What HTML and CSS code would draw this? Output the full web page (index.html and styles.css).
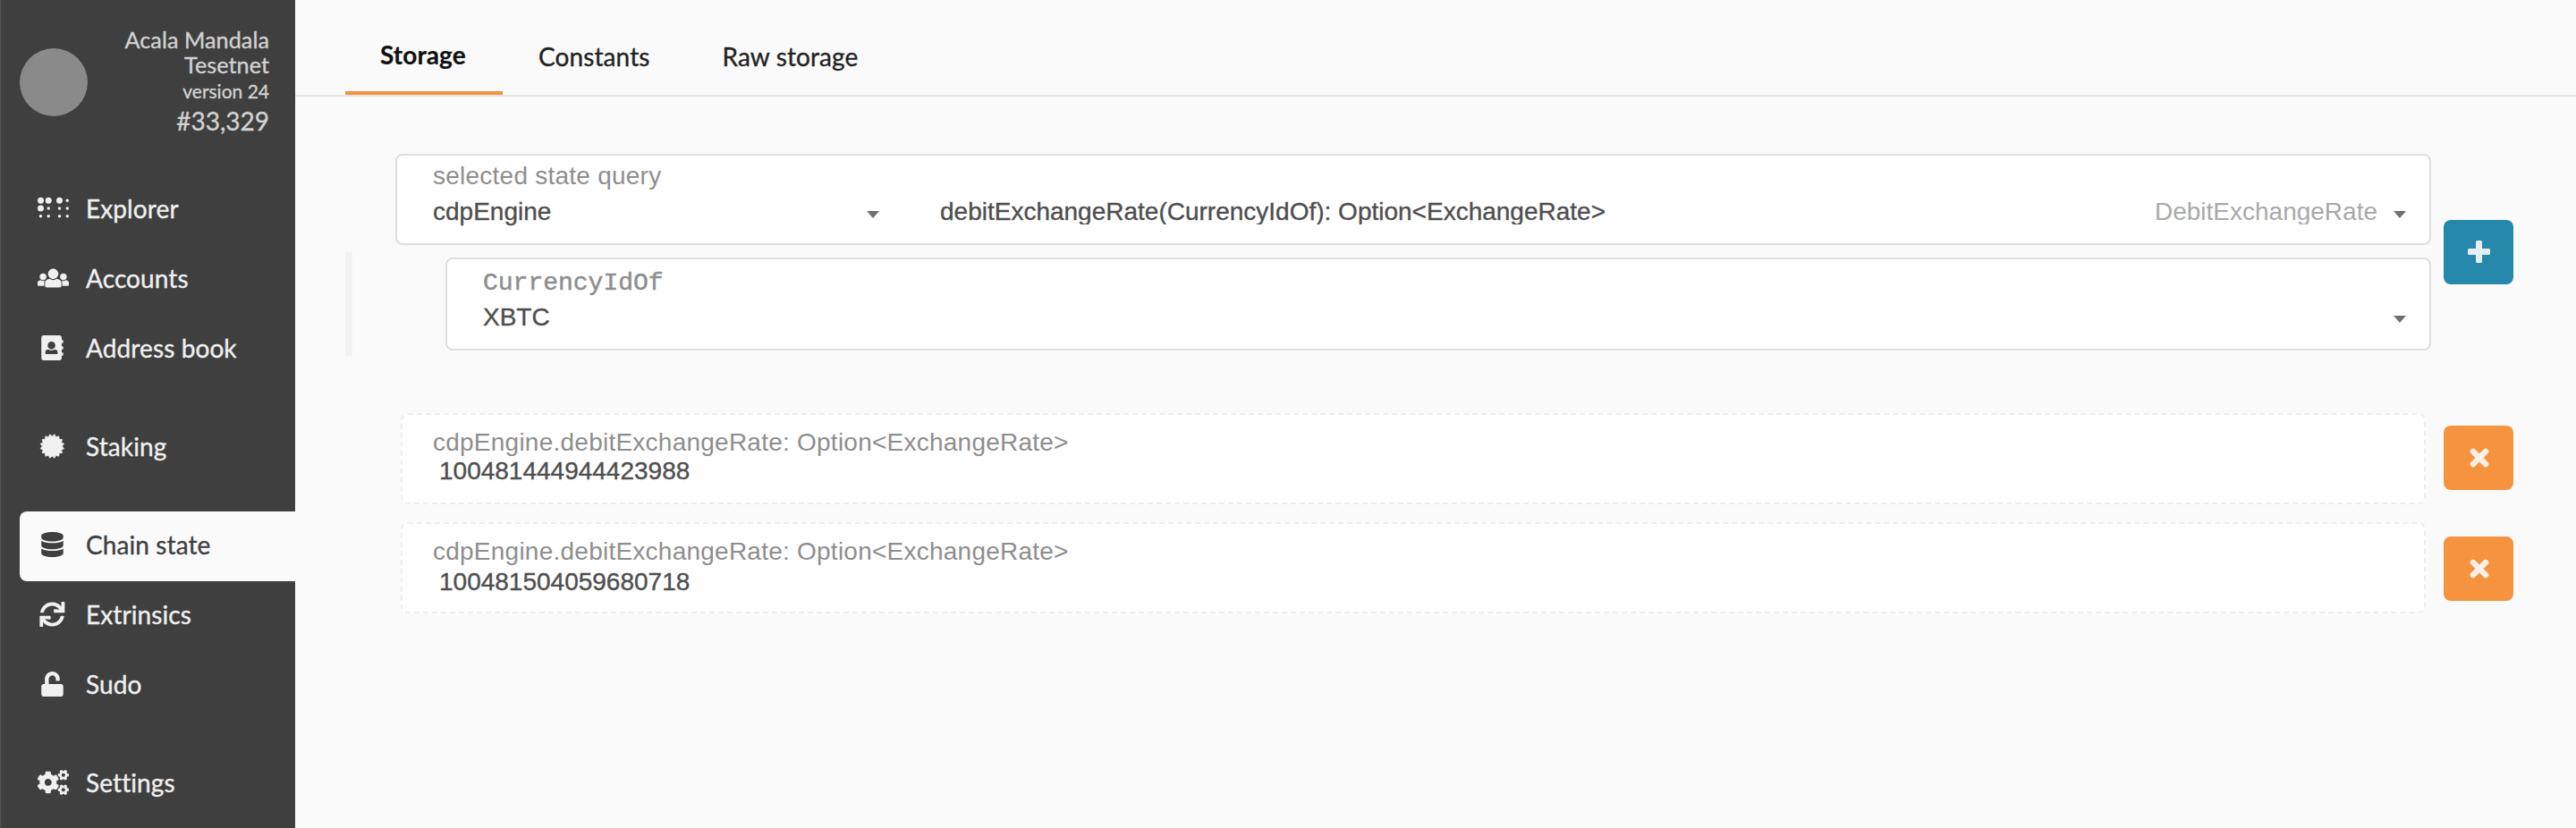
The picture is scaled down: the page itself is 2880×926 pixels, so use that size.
FILE: index.html
```
<!DOCTYPE html>
<html lang="en">
<head>
<meta charset="utf-8">
<title>Chain state</title>
<link rel="stylesheet" href="styles.css">
</head>
<body>
<aside class="sidebar">
  <header class="chain">
    <span class="chain-logo"></span>
    <div class="chain-info">
      <div class="chain-name">Acala Mandala Tesetnet</div>
      <div class="chain-version">version 24</div>
      <div class="chain-block">#33,329</div>
    </div>
  </header>
  <nav class="menu">
    <a class="item"><svg class="icon" viewBox="0 0 640 512"><g><circle cx="64" cy="96" r="64"/><circle cx="224" cy="96" r="64"/><circle cx="64" cy="256" r="64"/><circle cx="448" cy="96" r="64"/><circle cx="608" cy="96" r="32"/><circle cx="224" cy="256" r="32"/><circle cx="448" cy="256" r="32"/><circle cx="608" cy="256" r="32"/><circle cx="64" cy="416" r="32"/><circle cx="224" cy="416" r="32"/><circle cx="448" cy="416" r="32"/><circle cx="608" cy="416" r="32"/></g></svg><span>Explorer</span></a>
    <a class="item"><svg class="icon" viewBox="0 0 640 512"><path d="M320 64c57.99 0 105 47.01 105 105s-47.01 105-105 105-105-47.01-105-105S262.01 64 320 64zm113.463 217.366l-39.982-9.996c-49.168 35.365-108.766 27.473-146.961 0l-39.982 9.996C174.485 289.379 152 318.177 152 351.216V412c0 19.882 16.118 36 36 36h264c19.882 0 36-16.118 36-36v-60.784c0-33.039-22.485-61.837-54.537-69.85zM528 300c38.66 0 70-31.34 70-70s-31.34-70-70-70-70 31.34-70 70 31.34 70 70 70zm-416 0c38.66 0 70-31.34 70-70s-31.34-70-70-70-70 31.34-70 70 31.34 70 70 70zm24 112v-60.784c0-16.551 4.593-32.204 12.703-45.599-29.988 14.72-63.336 8.708-85.69-7.37l-26.655 6.664C14.99 310.252 0 329.452 0 351.477V392c0 13.255 10.745 24 24 24h112.169a52.417 52.417 0 0 1-.169-4zm467.642-107.09l-26.655-6.664c-27.925 20.086-60.89 19.233-85.786 7.218C499.369 318.893 504 334.601 504 351.216V412c0 1.347-.068 2.678-.169 4H616c13.255 0 24-10.745 24-24v-40.523c0-22.025-14.99-41.225-36.358-46.567z"/></svg><span>Accounts</span></a>
    <a class="item"><svg class="icon" viewBox="-77 0 640 512"><path d="M436 160c6.6 0 12-5.4 12-12v-40c0-6.6-5.4-12-12-12h-20V48c0-26.5-21.5-48-48-48H48C21.5 0 0 21.5 0 48v416c0 26.5 21.5 48 48 48h320c26.5 0 48-21.5 48-48v-48h20c6.6 0 12-5.4 12-12v-40c0-6.6-5.4-12-12-12h-20v-64h20c6.6 0 12-5.4 12-12v-40c0-6.6-5.4-12-12-12h-20v-64h20zm-228-32c44 0 79 35 79 79s-35 79-79 79-79-35-79-79 35-79 79-79zm126 236.800c0 10.600-10 19.200-22.400 19.200H104.400C92 384 82 375.400 82 364.800v-19.200c0-31.800 20-50 56-57.600c40 28 100 28 140 0c36 7.600 56 25.800 56 57.600v19.200z"/></svg><span>Address book</span></a>
    <a class="item gap"><svg class="icon" viewBox="-43 0 640 512"><polygon class="seal" points="456,256 497.3,304 440.8,332.5 460.5,392.7 397.4,397.4 392.7,460.5 332.5,440.8 304,497.3 256,456 208,497.3 179.5,440.8 119.3,460.5 114.6,397.4 51.5,392.7 71.2,332.5 14.7,304 56,256 14.7,208 71.2,179.5 51.5,119.3 114.6,114.6 119.3,51.5 179.5,71.2 208,14.7 256,56 304,14.7 332.5,71.2 392.7,51.5 397.4,114.6 460.5,119.3 440.8,179.5 497.3,208"/></svg><span>Staking</span></a>
    <a class="item gap active"><svg class="icon" viewBox="-77 0 640 512"><path d="M448 73.143v45.714C448 159.143 347.667 192 224 192S0 159.143 0 118.857V73.143C0 32.857 100.333 0 224 0s224 32.857 224 73.143zM448 176v102.857C448 319.143 347.667 352 224 352S0 319.143 0 278.857V176c48.125 33.143 136.208 48.572 224 48.572S399.874 209.143 448 176zm0 160v102.857C448 479.143 347.667 512 224 512S0 479.143 0 438.857V336c48.125 33.143 136.208 48.572 224 48.572S399.874 369.143 448 336z"/></svg><span>Chain state</span></a>
    <a class="item"><svg class="icon" viewBox="-43 0 640 512"><path d="M440.935 12.574l3.966 82.766C399.416 41.904 331.674 8 256 8 134.813 8 33.933 94.924 12.296 209.824 10.908 217.193 16.604 224 24.103 224h49.084c5.570 0 10.377-3.842 11.676-9.259C103.407 137.408 172.931 80 256 80c60.893 0 114.512 30.856 146.104 77.801l-101.530-4.865c-6.845-.327-12.574 5.133-12.574 11.986v47.411c0 6.627 5.373 12 12 12h200.333c6.627 0 12-5.373 12-12V12c0-6.627-5.373-12-12-12h-47.411c-6.853 0-12.315 5.729-11.987 12.574zM256 432c-60.895 0-114.517-30.858-146.109-77.805l101.868 4.871c6.845.327 12.573-5.134 12.573-11.986v-47.412c0-6.627-5.373-12-12-12H12c-6.627 0-12 5.373-12 12V500c0 6.627 5.373 12 12 12h47.385c6.863 0 12.328-5.745 11.985-12.599l-4.129-82.575C112.725 470.166 180.405 504 256 504c121.187 0 222.067-86.924 243.704-201.824 1.388-7.369-4.308-14.176-11.807-14.176h-49.084c-5.570 0-10.377 3.842-11.676 9.259C408.593 374.592 339.069 432 256 432z"/></svg><span>Extrinsics</span></a>
    <a class="item"><svg class="icon" viewBox="-77 0 640 512"><path d="M400 256H152V152.900c0-39.600 31.700-72.500 71.300-72.900 40-.4 72.700 32.100 72.700 72v16c0 13.300 10.700 24 24 24h32c13.300 0 24-10.700 24-24v-16C376 68 307.500-.3 223.500 0 139.500.3 72 69.500 72 153.500V256H48c-26.500 0-48 21.500-48 48v160c0 26.500 21.500 48 48 48h352c26.500 0 48-21.500 48-48V304c0-26.500-21.500-48-48-48z"/></svg><span>Sudo</span></a>
    <a class="item gap"><svg class="icon" viewBox="0 0 640 512"><path id="cog" d="M512.100 191l-8.200 14.300c-3 5.300-9.400 7.500-15.100 5.400-11.800-4.400-22.600-10.700-32.100-18.600-4.600-3.800-5.800-10.500-2.800-15.700l8.200-14.300c-6.900-8-12.300-17.300-15.900-27.400h-16.500c-6 0-11.200-4.300-12.200-10.300-2-12-2.100-24.600 0-37.100 1-6 6.200-10.400 12.200-10.400h16.500c3.600-10.100 9-19.400 15.900-27.400l-8.200-14.300c-3-5.200-1.900-11.900 2.800-15.700 9.500-7.900 20.400-14.200 32.100-18.600 5.700-2.100 12.100.1 15.100 5.400l8.200 14.300c10.500-1.900 21.200-1.900 31.700 0L552 6.300c3-5.300 9.400-7.500 15.100-5.400 11.800 4.400 22.600 10.700 32.100 18.600 4.600 3.800 5.800 10.500 2.800 15.700l-8.200 14.300c6.900 8 12.300 17.300 15.900 27.400h16.500c6 0 11.200 4.300 12.200 10.300 2 12 2.100 24.600 0 37.100-1 6-6.200 10.400-12.200 10.400h-16.500c-3.600 10.100-9 19.400-15.900 27.400l8.200 14.300c3 5.200 1.900 11.900-2.800 15.700-9.500 7.900-20.400 14.200-32.100 18.600-5.700 2.100-12.100-.1-15.100-5.400l-8.200-14.300c-10.400 1.900-21.200 1.900-31.700 0zm-10.500-58.800c38.500 29.600 82.400-14.300 52.800-52.800-38.500-29.700-82.400 14.300-52.800 52.800z"/><use href="#cog" y="300"/><path d="M386.300 286.100l33.700 16.800c10.100 5.800 14.500 18.100 10.500 29.100-8.900 24.200-26.400 46.400-42.600 65.800-7.400 8.900-20.200 11.100-30.300 5.300l-29.100-16.800c-16 13.700-34.600 24.600-54.900 31.700v33.600c0 11.600-8.300 21.600-19.700 23.600-24.600 4.200-50.400 4.400-75.900 0-11.500-2-20-11.900-20-23.600V418c-20.300-7.200-38.900-18-54.900-31.700L74 403c-10 5.800-22.900 3.600-30.300-5.300-16.200-19.400-33.300-41.600-42.200-65.700-4-10.900.4-23.200 10.500-29.100l33.300-16.800c-3.900-20.900-3.900-42.400 0-63.400L12 205.800c-10.100-5.800-14.600-18.100-10.500-29 8.900-24.200 26-46.400 42.200-65.800 7.400-8.900 20.200-11.100 30.300-5.300l29.100 16.800c16-13.700 34.600-24.600 54.900-31.700V57.100c0-11.500 8.200-21.500 19.600-23.500 24.600-4.200 50.500-4.400 76-.1 11.500 2 20 11.900 20 23.600v33.600c20.300 7.200 38.900 18 54.900 31.700l29.100-16.800c10-5.800 22.900-3.600 30.300 5.300 16.200 19.400 33.200 41.600 42.100 65.800 4 10.900.1 23.200-10 29.100l-33.700 16.800c3.900 21 3.900 42.500 0 63.500zm-117.600 21.100c59.200-77-28.700-164.900-105.700-105.700-59.200 77 28.700 164.900 105.700 105.700z"/></svg><span>Settings</span></a>
  </nav>
</aside>
<main class="content">
  <nav class="tabs">
    <a class="tab selected">Storage</a>
    <a class="tab">Constants</a>
    <a class="tab">Raw storage</a>
  </nav>
  <section class="query">
    <div class="fields">
      <div class="field state">
        <label class="label">selected state query</label>
        <div class="selects">
          <div class="value module"><span>cdpEngine</span><i class="caret"></i></div>
          <div class="value method"><span class="clip signature">debitExchangeRate(CurrencyIdOf): Option&lt;ExchangeRate&gt;</span><span class="clip hint">DebitExchangeRate</span><i class="caret"></i></div>
        </div>
      </div>
      <div class="params">
        <div class="field param">
          <label class="label mono">CurrencyIdOf</label>
          <div class="value"><span>XBTC</span><i class="caret"></i></div>
        </div>
      </div>
    </div>
    <button class="button add"><svg viewBox="0 0 25 25"><path d="M10.500 0h4q1.500 0 1.500 1.500V9h7.500q1.500 0 1.500 1.500v4q0 1.500-1.500 1.500H16v7.500q0 1.500-1.500 1.500h-4q-1.500 0-1.500-1.500V16H1.500Q0 16 0 14.500v-4Q0 9 1.500 9H9V1.500Q9 0 10.500 0z"/></svg></button>
  </section>
  <section class="results">
    <div class="result">
      <div class="output"><label class="label">cdpEngine.debitExchangeRate: Option&lt;ExchangeRate&gt;</label><div class="number">100481444944423988</div></div>
      <button class="button remove"><svg viewBox="0 0 22 22"><path class="cross" d="M4 4l14 14M18 4L4 18"/></svg></button>
    </div>
    <div class="result second">
      <div class="output"><label class="label">cdpEngine.debitExchangeRate: Option&lt;ExchangeRate&gt;</label><div class="number">100481504059680718</div></div>
      <button class="button remove"><svg viewBox="0 0 22 22"><path class="cross" d="M4 4l14 14M18 4L4 18"/></svg></button>
    </div>
  </section>
</main>
</body>
</html>
```
FILE: styles.css
```
* { box-sizing: border-box; }

body {
  margin: 0;
  display: flex;
  height: 926px;
  overflow: hidden;
  background: #fafafa;
  color: #4e4e4e;
  font: 28px/32px "Liberation Sans", Arial, sans-serif;
  font-variant-ligatures: none;
  -webkit-text-stroke: 0.35px currentColor;
}

/* Sidebar */
.sidebar {
  width: 330px;
  flex: none;
  background: #3f3f3f;
  border-left: 1px solid #535353;
  color: #f0f0f0;
  font-family: Lato, sans-serif;
}
.chain {
  display: flex;
  justify-content: space-between;
  height: 196px;
  padding: 30px 29px 0 21px;
  color: #d2d2d2;
}
.chain-logo {
  width: 76px;
  height: 76px;
  margin-top: 24px;
  border-radius: 50%;
  background: #8a8a8a;
}
.chain-info { width: 180px; text-align: right; }
.chain-name { font-size: 25.2px; line-height: 28px; letter-spacing: 0.05px; }
.chain-version { font-size: 21px; line-height: 31px; }
.chain-block { font-size: 28px; line-height: 36px; }

.menu { padding-left: 21px; }
.item {
  display: flex;
  align-items: center;
  gap: 19px;
  height: 78px;
  padding: 0 0 4px 20px;
  border-radius: 8px 0 0 8px;
  letter-spacing: 0.1px;
}
.item.gap { margin-top: 32px; }
.item.active { background: #fafafa; color: #3f3f3f; }
.icon { width: 35px; height: 28px; fill: currentColor; }
.seal { stroke: currentColor; stroke-width: 16; stroke-linejoin: round; }

/* Tabs */
.content { flex: 1; min-width: 0; }
.tabs {
  display: flex;
  height: 108px;
  padding-left: 56px;
  border-bottom: 2px solid #e6e6e6;
  font-family: Lato, sans-serif;
  color: #222;
}
.tab { padding: 47px 41px 0 40px; letter-spacing: 0.1px; }
.tab.selected {
  width: 176px;
  padding: 45px 0 0 39px;
  border-bottom: 4px solid #f5933f;
  color: #111;
  font-weight: 700;
  -webkit-text-stroke: 0.2px currentColor;
}

/* Query form */
.query {
  display: flex;
  align-items: flex-start;
  gap: 14px;
  padding: 64px 70px 0 56px;
}
.fields { flex: 1; }
.field {
  background: #fff;
  border: 2px solid #dedede;
  border-radius: 8px;
}
.label {
  display: block;
  color: #8e8e8e;
  letter-spacing: 0.24px;
  -webkit-text-stroke: 0;
}
.mono {
  font-family: "Liberation Mono", monospace;
  letter-spacing: 0;
  -webkit-text-stroke: 0.5px currentColor;
}
.state { height: 102px; margin-left: 56px; padding: 7px 26px 0 40px; }
.selects { display: flex; padding-top: 8px; }
.value { display: flex; align-items: center; flex: 1; }
.module { flex: none; width: 499px; }
.method { padding-left: 68px; }
.clip { height: 33px; line-height: 32px; overflow: hidden; clip-path: inset(0 0 3px 0); margin-bottom: -1px; }
.hint { margin-left: auto; color: #a9a9a9; -webkit-text-stroke: 0; }
.caret {
  margin: 5px 0 0 auto;
  border: 7px solid transparent;
  border-top: 8px solid #707070;
  border-bottom: 0;
}
.hint + .caret { margin-left: 18px; }
.params {
  margin-top: 8px;
  padding: 6px 0 6px 104px;
  border-left: 8px solid #f2f2f2;
}
.param { height: 104px; padding: 11px 26px 0 40px; }
.param .value { margin-top: 6px; }
.param .caret { margin-top: 3px; }
.button {
  display: flex;
  align-items: center;
  justify-content: center;
  flex: none;
  width: 78px;
  height: 72px;
  padding: 0;
  border: 0;
  border-radius: 8px;
}
.add { margin-top: 74px; background: #2587aa; }
.add svg { width: 25px; height: 25px; margin: 0 0 1px 1px; fill: #e4eff3; }

/* Results */
.results { padding: 64px 70px 0 118px; }
.result { display: flex; justify-content: space-between; height: 122px; }
.output {
  width: 2264px;
  height: 102px;
  padding: 15px 34px;
  background: #fefefe;
  border: 2px dashed #eee;
  border-radius: 8px;
}
.number { padding-left: 7px; }
.second .number { padding-top: 2px; }
.remove { margin-top: 14px; background: #f5933f; }
.remove svg { width: 22px; height: 22px; margin: 0 0 1px 1px; }
.cross { stroke: #fbf0e7; stroke-width: 6.6; stroke-linecap: round; }
.second .remove { margin-top: 16px; }
```
